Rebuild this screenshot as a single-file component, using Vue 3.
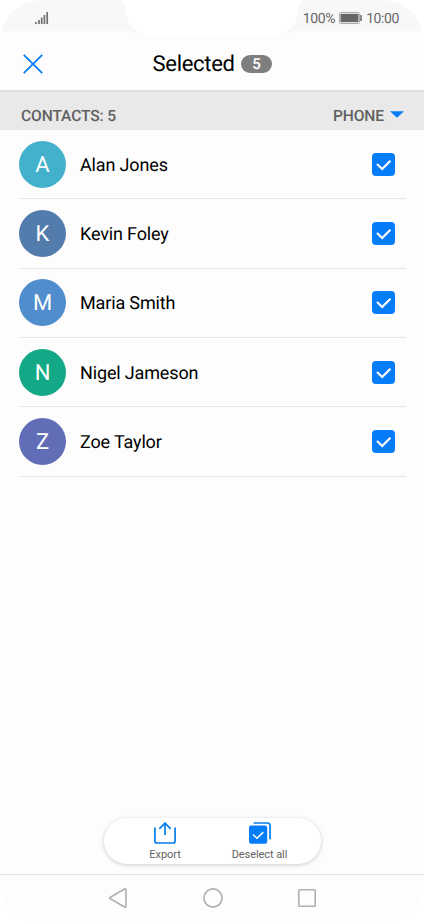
<script setup>
const contacts = [
  { name: 'Alan Jones', tone: 'cyan' },
  { name: 'Kevin Foley', tone: 'slate' },
  { name: 'Maria Smith', tone: 'blue' },
  { name: 'Nigel Jameson', tone: 'green' },
  { name: 'Zoe Taylor', tone: 'indigo' },
]
</script>

<template>
  <main class="phone">
    <div class="status">
      <svg class="status-shape" width="424" height="36" viewBox="0 0 424 36">
        <path d="M2 31C6 13 22 0 45 0H117C124 0 126 4 126 10C126 24 134 31 144 34V36H0V31Z" fill="#f8f8f8" />
        <path d="M422 31C418 13 402 0 379 0H307C300 0 298 4 298 10C298 24 290 31 280 34V36H424V31Z" fill="#f8f8f8" />
        <path d="M0 31H133Q140 35 153 35H271Q284 35 291 31H424V36H0Z" fill="#fdfdfd" />
      </svg>
      <svg class="signal" width="14" height="13" viewBox="0 0 14 13">
        <path d="M1 10v2M4 8v4M6.7 5.5V12M9.4 3v9M12.2 0v12" stroke="#707070" stroke-width="1.7" />
      </svg>
      <div class="status-right">
        <span>100%</span>
        <svg width="23" height="12" viewBox="0 0 23 12">
          <rect x=".5" y=".5" width="20" height="11" rx="1.2" fill="#fff" stroke="#aaa" />
          <rect x="1.5" y="1.8" width="18" height="8.4" fill="#666" />
          <path d="M22 3v6" stroke="#666" stroke-width="1.5" />
        </svg>
        <span>10:00</span>
      </div>
    </div>

    <header class="header">
      <svg class="close" width="20" height="20" viewBox="0 0 20 20">
        <path d="M.8.8l18.4 18.4M19.2.8L.8 19.2" stroke="#087ef0" stroke-width="1.8" />
      </svg>
      <h1>Selected</h1>
      <span class="count">5</span>
    </header>

    <div class="section">
      <span>CONTACTS: 5</span>
      <span class="source">PHONE
        <svg width="14" height="7" viewBox="0 0 14 7"><path d="M0 0.3H14L7 6.7Z" fill="#087ff5" /></svg>
      </span>
    </div>

    <ul class="list">
      <li v-for="contact in contacts" :key="contact.name" class="row">
        <span class="avatar" :class="contact.tone">{{ contact.name[0] }}</span>
        <span class="name">{{ contact.name }}</span>
        <svg class="check" width="23" height="23" viewBox="0 0 23 23">
          <rect width="23" height="23" rx="4" fill="#067df8" />
          <path d="M5 11.1l5.2 4.9 8.2-8.3" fill="none" stroke="#fff" stroke-width="2.1" />
        </svg>
      </li>
    </ul>

    <div class="actions">
      <button class="export">
        <svg width="22" height="22" viewBox="0 0 22 22" fill="none" stroke="#087eed" stroke-width="1.7">
          <path d="M.9 5.5V19Q.9 21 2.9 21H19.1Q21.1 21 21.1 19V5.5M11 13V1M5.3 6.8L11 1.1l5.7 5.7" />
        </svg>
        <span>Export</span>
      </button>
      <button class="deselect">
        <svg width="22" height="22" viewBox="0 0 22 22">
          <path d="M4.6 1H18.5Q21 1 21 3.5V17.3" fill="none" stroke="#087eed" stroke-width="1.7" />
          <rect y="3.6" width="18.2" height="18.2" rx="2" fill="#067df8" />
          <path d="M4 12.5l4 3.8 6.3-6.2" fill="none" stroke="#fff" stroke-width="1.5" />
        </svg>
        <span>Deselect all</span>
      </button>
    </div>

    <nav class="nav">
      <svg width="18" height="20" viewBox="0 0 18 20"><path d="M15.5 1Q17 .2 17 2V18Q17 19.8 15.5 19L1.4 10.8Q0 10 1.4 9.2Z" /></svg>
      <svg width="20" height="20" viewBox="0 0 20 20"><circle cx="10" cy="10" r="9.1" /></svg>
      <svg width="18" height="18" viewBox="0 0 18 18"><rect x=".8" y=".8" width="16.4" height="16.4" rx=".8" /></svg>
    </nav>
  </main>
</template>

<style>
body { background: #fff; }
</style>

<style scoped>
.phone { box-sizing: border-box; width: 424px; height: 922px; display: flex; flex-direction: column; background: #fdfdfd; border-radius: 0 0 38px 38px; font-family: Roboto, "Liberation Sans", sans-serif; color: #000; text-rendering: geometricPrecision; }
.status { position: relative; height: 31px; flex: none; display: flex; justify-content: space-between; align-items: flex-start; box-sizing: border-box; padding: 11px 25px 0 35px; background: #fff; }
.status-shape { position: absolute; left: 0; top: 0; background: #fff; }
.signal { position: relative; margin-top: 1px; }
.status-right { position: relative; display: flex; align-items: center; gap: 4px; font-size: 14px; letter-spacing: -.4px; line-height: 14px; color: #686868; }
.status-right span { padding-top: 1px; }
.status-right svg { margin-top: -1px; }
.header { position: relative; height: 59px; flex: none; display: flex; align-items: center; padding: 6px 0 0 23px; box-sizing: border-box; }
.close { flex: none; }
h1 { margin: 0 0 0 109.5px; padding-top: 2px; width: 82px; font-size: 22px; letter-spacing: -.3px; line-height: 26px; font-weight: 400; white-space: nowrap; }
.count { width: 31px; height: 18px; margin-left: 6.5px; border-radius: 9px; background: #7e7e7e; color: #fff; font-size: 15px; font-weight: 500; line-height: 18px; text-align: center; }
.section { height: 40px; flex: none; box-sizing: border-box; padding: 10px 20px 0 21px; border-top: 2px solid #e0e0e0; background: #e9e9e9; display: flex; justify-content: space-between; align-items: flex-start; color: #606060; font-size: 15.6px; letter-spacing: -.12px; font-weight: 500; line-height: 29px; white-space: nowrap; }
.source { display: flex; align-items: center; gap: 6px; }
.source svg { margin-bottom: 4px; }
.list { list-style: none; margin: 0; padding: 0 18px 0 19px; }
.row { height: 69.35px; box-sizing: border-box; border-bottom: 1px solid #e7e7e7; display: flex; align-items: center; padding-right: 11px; }
.avatar { width: 47px; height: 47px; border-radius: 50%; color: #fff; font-size: 22px; line-height: 50px; text-align: center; }
.name { flex: 1; margin-left: 14px; padding-top: 3px; font-size: 18px; letter-spacing: -.15px; line-height: 24px; }
.cyan { background: #44b1cc; }
.slate { background: #517cac; }
.blue { background: #508dcc; }
.green { background: #13a986; }
.indigo { background: #626db8; }
.actions { box-sizing: border-box; width: 217px; height: 46px; margin: auto auto 10px 104px; border-radius: 23px; background: #fff; box-shadow: 0 1px 4px #0003; display: grid; grid-template-columns: 122px 67px; }
button { padding: 4px 0 0; border: 0; background: none; font-family: inherit; font-size: 11px; letter-spacing: -.07px; line-height: 13px; color: #626262; display: flex; flex-direction: column; align-items: center; gap: 4px; white-space: nowrap; }
.nav { height: 48px; flex: none; box-sizing: border-box; border-top: 1px solid #e3e3e3; padding: 0 108px 2px 109px; display: flex; align-items: center; justify-content: space-between; }
.nav svg { fill: none; stroke: #b0b0b0; stroke-width: 1.6; }
</style>
